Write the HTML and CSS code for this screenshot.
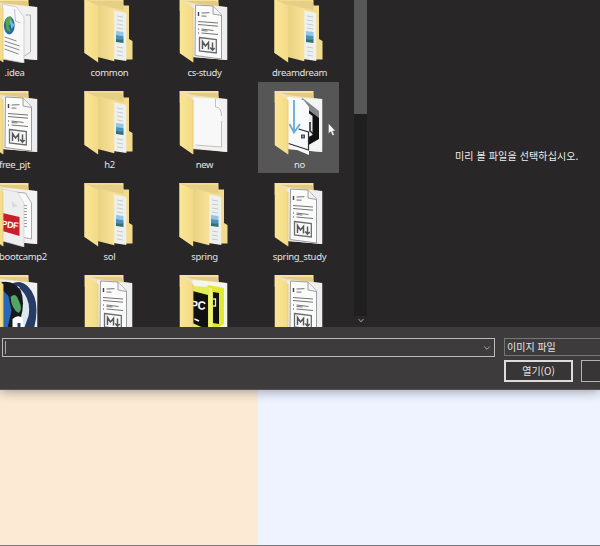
FILE: index.html
```
<!DOCTYPE html>
<html lang="ko">
<head>
<meta charset="utf-8">
<title>열기</title>
<link rel="stylesheet" href="styles.css">
</head>
<body>
<svg class="defs" aria-hidden="true">
  <defs>
    <linearGradient id="front" x1="0" y1="0" x2="1" y2="0"><stop offset="0" stop-color="#fbe696"/><stop offset="1" stop-color="#f3da86"/></linearGradient>
    <linearGradient id="mid" x1="0" y1="0" x2="1" y2="0"><stop offset="0" stop-color="#e5cd7e"/><stop offset=".5" stop-color="#ead384"/><stop offset=".8" stop-color="#f3dc90"/><stop offset="1" stop-color="#f8e297"/></linearGradient>
    <symbol id="fold" viewBox="0 0 48 64"><path d="M0 0 13.7 9V63.5L0 54Z" fill="url(#front)"/><path d="M13.5 9V63" stroke="#e2c873" stroke-width=".6"/></symbol>
    <symbol id="back" viewBox="0 0 48 64"><path d="M0 0H39V12H0Z" fill="#f7e29a"/><path d="M3 2H37L39 5V9L14 8Z" fill="#e2ca82"/><path d="M0 0 13 4 47.7 8V61L13 58Z" fill="#efe2b6"/></symbol>
    <symbol id="files" viewBox="0 0 48 64">
      <path d="M0 0H39V6.5H44.5V40L48 42V60.5H41L0 54Z" fill="#f2db8d"/>
      <path d="M3 2H37L39 6V11L10 5Z" fill="#e5ce85"/>
      <path d="M29 11 41.8 14V62L29 60Z" fill="#eef0ee"/>
      <path d="M32.5 17 38.5 18M32.5 21 38.5 22M32.5 25 38.5 26M32.5 29 38.5 30M32.5 48 38.5 49M32.5 52 38.5 53M32.5 56 38.5 57" stroke="#bcc8cf" stroke-width=".9"/>
      <path d="M31.5 32 39 33V37L31.5 36Z" fill="#93c5e4"/><path d="M31.5 36 39 37V41L31.5 40Z" fill="#4a91bd"/><path d="M31.5 40 39 40.5V44L31.5 43Z" fill="#356e73"/>
      <path d="M0 0 29.8 10V62.3L13 58Z" fill="url(#mid)"/>
      <path d="M0 0 13.7 7V63.5L0 54Z" fill="url(#front)"/>
    </symbol>
    <symbol id="md" viewBox="0 0 48 64">
      <use href="#back"/><path d="M13 5 47.7 8.3V61L13 58Z" fill="#edeeef"/>
      <path d="M16 6 33.5 7 42 16V60L15.5 56.5Z" fill="#fbfbfa" stroke="#919395" stroke-width=".9"/>
      <path d="M33.5 7V15L42 16.5" fill="#f4f4f4" stroke="#919395" stroke-width=".9"/>
      <path d="M19 13V17" stroke="#444" stroke-width="1.4"/><path d="M22 14 30 13.7M22 17 27 17.2M18.5 22.5 38.5 24M18.5 25.5 38.5 27.2M19 29.3V30.7M19 33.3V34.7M22 30 34 31.5M22 34 38.5 35.5M22 31.5 28 32" stroke="#737577" stroke-width="1"/>
      <path d="M20 38.5 36.8 40.5V54L20 52Z" fill="#fafafa" stroke="#6b6c6e" stroke-width="1.3"/>
      <path d="M23 50V42.5L26 47 29 43.3V50.5M33 43.5V51M30.7 48.5 33 51.2 35.2 49" fill="none" stroke="#55585b" stroke-width="1.5"/>
      <use href="#fold"/>
    </symbol>
    <symbol id="empty" viewBox="0 0 48 64">
      <use href="#back"/><path d="M13 6 47.7 8.3V61L13 57Z" fill="#f1f1f1"/>
      <path d="M15 7 37 8 42 17V56L15 54Z" fill="#f8f8f8"/><path d="M36 8V16Q42 16 42 25M42 30V56L16 54" fill="none" stroke="#b9b9b9" stroke-width=".9"/>
      <use href="#fold"/>
    </symbol>
    <symbol id="web" viewBox="0 0 48 64">
      <use href="#back"/><path d="M13 5 47.7 8.3V61L13 58Z" fill="#f1f1f1"/>
      <path d="M36 16H41V53L35 57" fill="none" stroke="#aaa" stroke-width=".9"/>
      <path d="M13 5 27 8 34.5 18V64L13 60Z" fill="#f8f8f9" stroke="#c5c6c9" stroke-width=".8"/>
      <path d="M25 10 26 22 31 24" fill="none" stroke="#aaa" stroke-width=".7"/>
      <ellipse cx="19.8" cy="26.5" rx="5.4" ry="9" fill="#246ca5"/><path d="M16 20 21 17 23 23 19 27 21 33 17 31Z" fill="#55a64c"/><path d="M20 20 25 26 22 30Z" fill="#73bde0"/>
      <path d="M15 38 27 42M15 42 30 47M15 46 30 51M15 50 29 55" stroke="#777a83" stroke-width=".9"/>
      <use href="#fold"/>
    </symbol>
    <symbol id="pdf" viewBox="0 0 48 64">
      <use href="#back"/><path d="M13 5 47.7 8.3V61L13 58Z" fill="#f2f2f2"/>
      <path d="M25 9 36 10 42 20V56L32 54Z" fill="#fafafa" stroke="#999" stroke-width=".8"/><path d="M36 22V46" stroke="#9d9d9d" stroke-width="3" stroke-dasharray="1 2"/>
      <path d="M13 6 28 9 34.5 20V64L13 58Z" fill="#eee" stroke="#c8c8c8" stroke-width=".6"/><path d="M22 18 28 23 23 25Z" fill="#d8dadd"/>
      <path d="M13 30 30 34V53L13 48Z" fill="#c91f2b"/>
      <text x="11.5" y="44" class="pdf-text" transform="rotate(7 14 44)">PDF</text>
      <use href="#fold"/>
    </symbol>
    <symbol id="app" viewBox="0 0 48 64">
      <use href="#back"/><path d="M13 6 47.7 8.3V61L13 58Z" fill="#f3f4f4"/>
      <path d="M26 9 44.5 22V48L34 54V20Z" fill="#111"/><path d="M22 15 28 7 44.5 20V27L34 19Z" fill="#858788"/><path d="M34 22 38 25V44L34 46Z" fill="#eceeee"/><path d="M35.5 31V40L39 43" fill="none" stroke="#202124" stroke-width="1.5"/>
      <path d="M13 6 29 9 34.5 16V64L13 55Z" fill="#f9fafb"/>
      <path d="M19.5 9V40M15 33 19.5 41.5 25.5 33" fill="none" stroke="#69abd3" stroke-width="1.8"/>
      <path d="M24 38 34 41V59L14 52.5" fill="none" stroke="#2c2f32" stroke-width="1.2"/><rect x="27" y="44" width="3" height="3" fill="#8b8e91" stroke="#27292c" stroke-width=".8"/>
      <use href="#fold"/>
    </symbol>
    <symbol id="orbit" viewBox="0 0 48 64">
      <use href="#back"/><path d="M13 5 47.7 8.3V61H13Z" fill="#eff2f5"/>
      <path d="M22 9Q30 4 38 11Q47 20 47 35Q47 48 42 61H30V12Z" fill="#263c66"/><path d="M31 14Q42 25 39 41L34 55H25V20Z" fill="#dce7f0"/>
      <path d="M12 7Q24 5 31 15Q36 27 31 44L20 57H12Z" fill="#17191c"/><path d="M12 14 19 21 22 36 18 53H12Z" fill="#2868b6"/><path d="M21 22Q26 17 29 25Q34 35 29 38Q22 34 21 22Z" fill="#52a565"/>
      <path d="M23 44Q28 39 33 43L35 57H23Z" fill="#fff"/><path d="M28 48H31V57H28Z" fill="#263c66"/>
      <use href="#fold"/>
    </symbol>
    <symbol id="pycharm" viewBox="0 0 48 64">
      <use href="#back"/><path d="M13 5 47.7 8.3V61H13Z" fill="#f5f6ed"/>
      <path d="M28 10 44.5 13V49L30 58Z" fill="#e0e92d"/><path d="M33.5 17 39.5 18V49L33.5 48Z" fill="#111"/><path d="M33 24H36V31H33" fill="none" stroke="#e8e8dc" stroke-width="1.3"/>
      <path d="M13 11 30 12 33.5 18V63H13Z" fill="#e2ed53"/><path d="M31 13V61" stroke="#f3ec91" stroke-width="3"/>
      <path d="M13 16 28.5 20V55L13 48Z" fill="#111"/><text x="10.5" y="34" class="pc-text" textLength="15" lengthAdjust="spacingAndGlyphs" transform="rotate(5 14 35)">PC</text><path d="M15 44 19.5 46" stroke="#fff" stroke-width="1.6"/>
      <use href="#fold"/>
    </symbol>
  </defs>
</svg>
<main class="desktop">
  <section class="dialog">
    <div class="browser">
      <div class="files">
        <div class="tile"><svg><use href="#web"/></svg><span>.idea</span></div>
        <div class="tile"><svg><use href="#files"/></svg><span>common</span></div>
        <div class="tile"><svg><use href="#md"/></svg><span>cs-study</span></div>
        <div class="tile"><svg><use href="#files"/></svg><span>dreamdream</span></div>
        <div class="tile"><svg><use href="#md"/></svg><span>free_pjt</span></div>
        <div class="tile"><svg><use href="#files"/></svg><span>h2</span></div>
        <div class="tile"><svg><use href="#empty"/></svg><span>new</span></div>
        <div class="tile selected"><svg><use href="#app"/></svg><span>no</span></div>
        <div class="tile"><svg><use href="#pdf"/></svg><span class="long">bootcamp2</span></div>
        <div class="tile"><svg><use href="#files"/></svg><span>sol</span></div>
        <div class="tile"><svg><use href="#files"/></svg><span>spring</span></div>
        <div class="tile"><svg><use href="#md"/></svg><span>spring_study</span></div>
        <div class="tile"><svg><use href="#orbit"/></svg></div>
        <div class="tile"><svg><use href="#md"/></svg></div>
        <div class="tile"><svg><use href="#pycharm"/></svg></div>
        <div class="tile"><svg><use href="#md"/></svg></div>
      </div>
      <div class="scrollbar">
        <div class="thumb"></div>
        <div class="track"></div>
        <svg class="down" viewBox="0 0 8 6"><path d="M1.5 1 4 3.8 6.5 1"/></svg>
      </div>
      <div class="preview">미리 볼 파일을 선택하십시오.</div>
    </div>
    <footer class="controls">
      <div class="filename"><i class="caret"></i><svg viewBox="0 0 8 6"><path d="M1.2 1.5 4 4.3 6.8 1.5"/></svg></div>
      <div class="actions">
        <div class="filter">이미지 파일</div>
        <div class="buttons"><button class="open">열기(O)</button><button class="cancel" aria-label="취소"></button></div>
      </div>
    </footer>
  </section>
  <svg class="cursor" viewBox="0 0 8 14"><path d="M.5.5V10.5L2.8 8.5 4.5 12.5 6.3 11.7 4.6 7.9H7.4Z"/></svg>
</main>
</body>
</html>
```

FILE: styles.css
```
* { box-sizing: border-box; }
body { margin: 0; overflow: hidden; font-family: "Noto Sans", "Noto Sans CJK KR", sans-serif; }
.defs { position: absolute; width: 0; height: 0; }
.desktop {
  position: relative;
  width: 600px;
  height: 546px;
  overflow: hidden;
  background: linear-gradient(90deg, #fcead4 258px, #eef3ff 258px);
  border-bottom: 1px solid #777b80;
}
.dialog {
  width: 600px;
  height: 390px;
  background: #3d3b3c;
  border-bottom: 1px solid #555253;
  box-shadow: 0 1px 11px rgba(20, 20, 35, .42);
}
.browser {
  display: grid;
  grid-template-columns: 354px 13px 1fr;
  height: 327px;
  overflow: hidden;
  background: #282627;
}
.files {
  display: grid;
  grid-template-columns: repeat(4, 81px);
  grid-auto-rows: 91px;
  gap: 1px 14px;
  margin: -10px 0 0 -27px;
}
.tile {
  display: flex;
  flex-direction: column;
  align-items: center;
  padding-top: 9px;
  color: #e5e3e4;
  font-size: 9.5px;
  line-height: 14px;
  letter-spacing: -.32px;
  white-space: nowrap;
}
.tile svg { width: 49px; height: 64px; flex: none; }
.tile span { margin: 3px 0 0 2px; }
.tile .long { margin-left: 19px; }
.selected { background: #565657; }
.pdf-text { font: bold 9px "Liberation Sans", sans-serif; fill: #fff; }
.pc-text { font: bold 12px "Liberation Sans", sans-serif; fill: #fff; }
.scrollbar { display: flex; flex-direction: column; align-items: center; }
.thumb { width: 13px; height: 114px; background: #575758; }
.track { width: 13px; height: 202px; background: #1f1f1f; }
.down { width: 8px; height: 6px; margin-top: 2px; }
.down path, .filename path { fill: none; stroke: #aaa; stroke-width: 1; }
.preview {
  padding: 148px 0 0 88px;
  color: #eeeced;
  font: 10px/16px "Noto Sans CJK KR", sans-serif;
  letter-spacing: .12px;
  white-space: nowrap;
}
.controls { display: flex; gap: 9px; height: 62px; padding: 11px 0 0 2px; overflow: hidden; }
.filename {
  display: flex;
  flex: none;
  align-items: center;
  justify-content: space-between;
  width: 493px;
  height: 19px;
  padding: 0 3px 0 2px;
  border: 1px solid #bcbabb;
  background: #3d3b3c;
}
.filename svg { width: 8px; height: 6px; }
.caret { width: 1px; height: 13px; background: #aaa; }
.actions { width: 180px; flex: none; }
.filter {
  height: 18px;
  padding-left: 2px;
  border: 1px solid #777576;
  color: #e6e4e5;
  font: 10px/16px "Noto Sans CJK KR", sans-serif;
}
.buttons { display: flex; gap: 8px; margin-top: 4px; }
button {
  width: 69px;
  height: 22px;
  padding: 0;
  border: 1px solid #b5b3b4;
  border-radius: 0;
  background: #373536;
  color: #e6e4e5;
  font: 10px/18px "Noto Sans CJK KR", sans-serif;
}
.open { border: 2px solid #dddbdc; }
.cursor { position: absolute; left: 328px; top: 123px; width: 8px; height: 14px; }
.cursor path { fill: #fff; stroke: #555; stroke-width: .4; }
```
